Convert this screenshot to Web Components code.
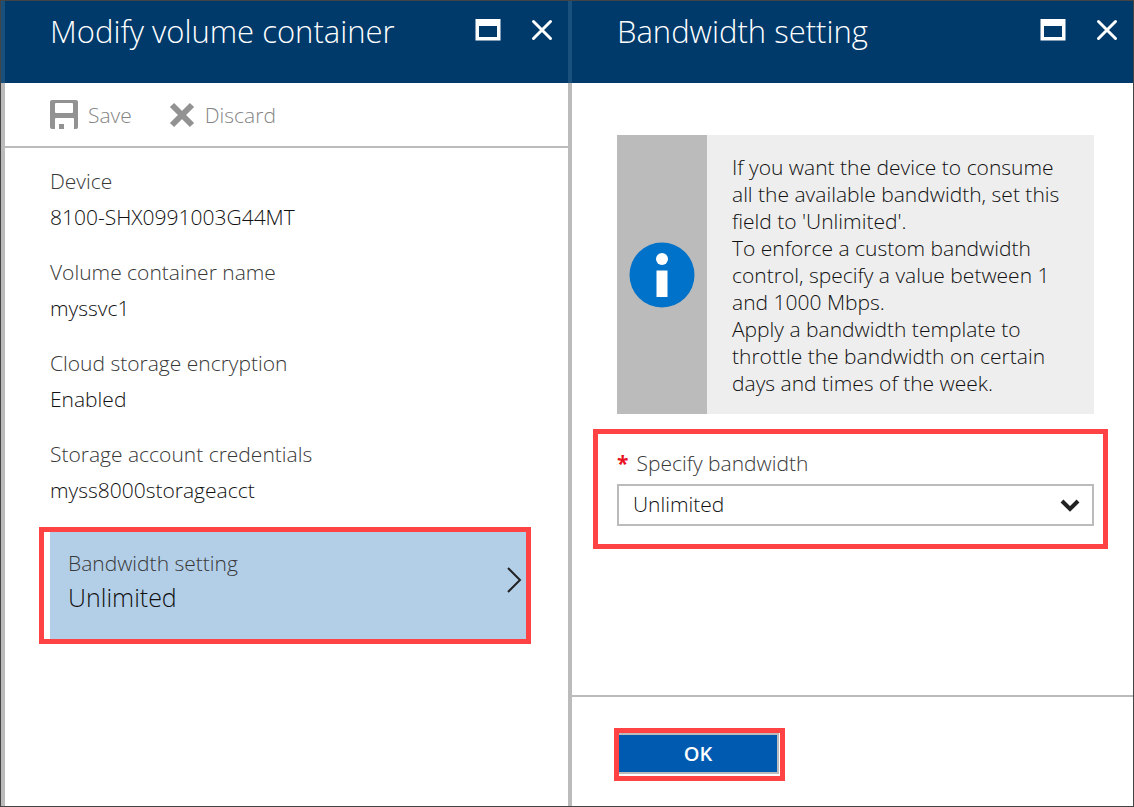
<!DOCTYPE html>
<html lang="en">
<head>
<meta charset="utf-8">
<title>Modify volume container</title>
<style>
  html { height: 100%; }
  body {
    margin: 0;
    min-height: 100%;
    display: flex;
    font-family: "Open Sans", "Noto Sans", sans-serif;
    font-weight: 300;
    font-size: 21px;
    line-height: 36px;
    color: #111;
    background: #fff;
    --header: #003a6b;
    --header-edge: #1a507c;
    --line: #bbb;
    --mark: #ff4345;
    --label: #383838;
  }
</style>
</head>
<body>
<portal-journey></portal-journey>

<template id="journey-template">
  <style>
    :host { flex: 1; display: grid; grid-template-columns: 567fr 565fr; border: 1px solid #444; }
    .fields { display: flex; flex-direction: column; gap: 19px; padding: 15px 37px 24px 45px; }
    .fields highlight-frame { margin-left: -11px; padding-left: 6px; }
    .bandwidth { padding: 52px 39px 24px 45px; }
    .bandwidth highlight-frame { margin: 15px -14px 0 -24px; padding: 14px 9px 18px 19px; }
    .footer highlight-frame { width: fit-content; padding: 0 1px 2px 0; }
    .ok {
      box-sizing: border-box; display: block; width: 160px; height: 41px; padding: 0;
      border: 2px solid var(--line); border-left: 0; background: #005bb0; color: #fff;
      font: 600 20px/36px "Open Sans", sans-serif; cursor: pointer;
    }
  </style>
  <portal-blade heading="Modify volume container">
    <tool-bar slot="toolbar"></tool-bar>
    <div class="fields">
      <field-pair label="Device">8100-SHX0991003G44MT</field-pair>
      <field-pair label="Volume container name">myssvc1</field-pair>
      <field-pair label="Cloud storage encryption">Enabled</field-pair>
      <field-pair label="Storage account credentials">myss8000storageacct</field-pair>
      <highlight-frame><setting-tile label="Bandwidth setting">Unlimited</setting-tile></highlight-frame>
    </div>
  </portal-blade>
  <portal-blade heading="Bandwidth setting">
    <div class="bandwidth">
      <info-box>If you want the device to consume<br>all the available bandwidth, set this<br>field to 'Unlimited'.<br>To enforce a custom bandwidth<br>control, specify a value between 1<br>and 1000 Mbps.<br>Apply a bandwidth template to<br>throttle the bandwidth on certain<br>days and times of the week.</info-box>
      <highlight-frame><bandwidth-select></bandwidth-select></highlight-frame>
    </div>
    <div class="footer" slot="footer">
      <highlight-frame><button class="ok" type="button">OK</button></highlight-frame>
    </div>
  </portal-blade>
</template>

<template id="blade-template">
  <style>
    :host { display: flex; flex-direction: column; min-width: 0; }
    header {
      box-sizing: border-box; height: 82px; display: flex; align-items: flex-start;
      padding: 10px 13px 0 45px; background: var(--header); color: #fff;
      border-left: 4px solid var(--header-edge);
    }
    h1 { margin: 0; flex: 1; font-size: 31px; font-weight: 300; line-height: 40px; white-space: nowrap; }
    button { display: flex; margin: 4px 0 0; padding: 0; border: 0; background: none; color: #fff; cursor: pointer; }
    .close { margin-left: 26px; }
    main { flex: 1; display: flex; flex-direction: column; border-left: 4px solid var(--line); }
    .content { flex: 1; }
    .foot { border-top: 2px solid var(--line); padding: 31px 42px 25px; }
    .foot[hidden] { display: none; }
  </style>
  <header>
    <h1></h1>
    <button type="button" aria-label="Maximize">
      <svg width="30" height="28" viewBox="0 0 30 28"><path fill="#fff" fill-rule="evenodd" d="M2.500 4H27.500V25.500H2.500ZM6 11V22H24V11Z"/></svg>
    </button>
    <button class="close" type="button" aria-label="Close">
      <svg width="26" height="28" viewBox="0 0 26 28"><path stroke="#fff" stroke-width="3" stroke-linecap="round" d="M4.500 6.500L21.500 23.500M21.500 6.500L4.500 23.500"/></svg>
    </button>
  </header>
  <main>
    <slot name="toolbar"></slot>
    <div class="content"><slot></slot></div>
    <div class="foot"><slot name="footer"></slot></div>
  </main>
</template>

<template id="toolbar-template">
  <style>
    :host { display: flex; gap: 37px; height: 63px; padding-left: 45px; align-items: center; border-bottom: 2px solid var(--line); }
    button { display: flex; align-items: center; gap: 10px; padding: 0; border: 0; background: none; font: inherit; color: #858585; }
  </style>
  <button type="button">
    <svg width="28" height="29" viewBox="0 0 28 29"><path fill="#929292" d="M2 0H26Q28 0 28 2V27Q28 29 26 29H24V19Q24 18 23 18H6Q5 18 5 19V29H2Q0 29 0 27V2Q0 0 2 0Z"/><rect x="5" y="3" width="18" height="10" rx="1" fill="#fff"/><rect x="9" y="24" width="5" height="5" fill="#929292"/></svg>
    <span>Save</span>
  </button>
  <button type="button">
    <svg width="26" height="26" viewBox="0 0 26 26"><path stroke="#929292" stroke-width="6" d="M3 3L23 23M23 3L3 23"/></svg>
    <span>Discard</span>
  </button>
</template>

<template id="field-template">
  <style>
    :host { display: block; }
    dl, dt, dd { margin: 0; }
    dt { color: var(--label); }
  </style>
  <dl><dt></dt><dd><slot></slot></dd></dl>
</template>

<template id="frame-template">
  <style>:host { display: block; border: 5px solid var(--mark); }</style>
  <slot></slot>
</template>

<template id="tile-template">
  <style>
    :host { display: block; }
    button {
      box-sizing: border-box; width: 100%; display: flex; align-items: center; justify-content: space-between;
      padding: 14px 4px 25px 18px; border: 0; background: #b3cfe8; font: inherit; line-height: 34px;
      color: inherit; text-align: left; cursor: pointer;
    }
    span { display: block; }
    .label { color: var(--label); }
    .value { font-size: 25px; }
  </style>
  <button type="button">
    <span><span class="label"></span><span class="value"><slot></slot></span></span>
    <svg width="16" height="28" viewBox="0 0 16 28"><path fill="none" stroke="#222" stroke-width="2" d="M2 2L14 14L2 26"/></svg>
  </button>
</template>

<template id="info-template">
  <style>
    :host { display: flex; background: #eee; }
    .side { flex: none; width: 90px; display: flex; align-items: center; justify-content: center; background: var(--line); }
    p { margin: 0; padding: 19px 0 17px 25px; line-height: 27px; white-space: nowrap; }
  </style>
  <div class="side">
    <svg width="66" height="66" viewBox="0 0 66 66"><circle cx="33" cy="33" r="32.5" fill="#0072c9"/><circle cx="33" cy="17" r="6" fill="#fff"/><path fill="#fff" d="M27.500 28.500H38.500V55H27.500Z"/></svg>
  </div>
  <p><slot></slot></p>
</template>

<template id="select-template">
  <style>
    :host { display: block; }
    label { display: flex; gap: 8px; line-height: 30px; margin-bottom: 6px; color: var(--label); }
    .star { color: #e81123; font-weight: 700; }
    .box { position: relative; }
    select {
      appearance: none; box-sizing: border-box; display: block; width: 100%; height: 42px;
      margin: 0; padding: 0 48px 2px 14px; border: 2px solid var(--line); border-radius: 0;
      background: #fff; font: inherit; color: inherit;
    }
    svg { position: absolute; right: 14px; top: 14px; pointer-events: none; }
  </style>
  <label for="bandwidth"><span class="star">*</span><span>Specify bandwidth</span></label>
  <div class="box">
    <select id="bandwidth"><option>Unlimited</option></select>
    <svg width="20" height="14" viewBox="0 0 20 14"><path fill="none" stroke="#222" stroke-width="4" d="M2 3L10 11L18 3"/></svg>
  </div>
</template>

<script>
  class TemplateElement extends HTMLElement {
    constructor() {
      super();
      const root = this.attachShadow({ mode: "open" });
      root.append(document.getElementById(this.constructor.template).content.cloneNode(true));
    }
  }
  class FieldPair extends TemplateElement {
    static template = "field-template";
    connectedCallback() { this.shadowRoot.querySelector("dt").textContent = this.getAttribute("label"); }
  }
  class SettingTile extends TemplateElement {
    static template = "tile-template";
    connectedCallback() { this.shadowRoot.querySelector(".label").textContent = this.getAttribute("label"); }
  }
  class PortalBlade extends TemplateElement {
    static template = "blade-template";
    connectedCallback() {
      this.shadowRoot.querySelector("h1").textContent = this.getAttribute("heading");
      this.shadowRoot.querySelector(".foot").hidden = !this.querySelector('[slot="footer"]');
    }
  }
  customElements.define("tool-bar", class extends TemplateElement { static template = "toolbar-template"; });
  customElements.define("highlight-frame", class extends TemplateElement { static template = "frame-template"; });
  customElements.define("info-box", class extends TemplateElement { static template = "info-template"; });
  customElements.define("bandwidth-select", class extends TemplateElement { static template = "select-template"; });
  customElements.define("field-pair", FieldPair);
  customElements.define("setting-tile", SettingTile);
  customElements.define("portal-blade", PortalBlade);
  customElements.define("portal-journey", class extends TemplateElement { static template = "journey-template"; });
</script>
</body>
</html>
